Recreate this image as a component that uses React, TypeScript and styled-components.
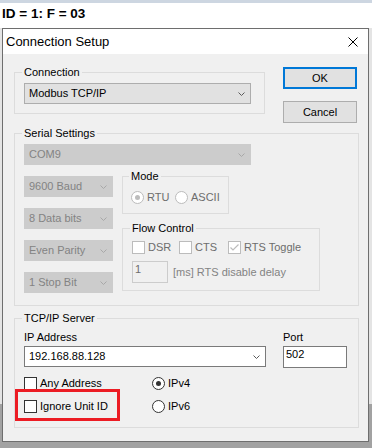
import React from 'react'
import styled, { createGlobalStyle, css } from 'styled-components'

const GlobalStyle = createGlobalStyle`
  html, body {
    margin: 0;
    padding: 0;
  }
  body {
    width: 372px;
    height: 448px;
    overflow: hidden;
    background: #ffffff;
    font-family: "Liberation Sans", Arial, sans-serif;
  }
`

const Page = styled.div`
  display: flex;
  flex-direction: column;
  width: 372px;
  height: 448px;
`

const TopStrip = styled.div`
  height: 3px;
  background: #cdd6e1;
`

const Header = styled.div`
  height: 25px;
  box-sizing: border-box;
  padding: 3px 0 0 2px;
  font-size: 13.5px;
  line-height: 16px;
  font-weight: bold;
  color: #000;
  background: #fff;
`

const Backdrop = styled.div`
  flex: 1;
  padding: 0 3px 6px 2px;
  background: linear-gradient(#e4e4e4 376px, #a2a2a2 376px);
`

const Dialog = styled.div`
  width: 367px;
  box-sizing: border-box;
  border: 1px solid #6e6e6e;
  background: #f0f0f0;
  display: flex;
  flex-direction: column;
`

const TitleBar = styled.div`
  height: 25px;
  display: flex;
  align-items: center;
  justify-content: space-between;
  padding: 0 10px 0 3px;
  background: #fff;
  font-size: 13px;
  line-height: 16px;
  color: #000;
`

const Body = styled.div`
  display: flex;
  flex-direction: column;
  padding: 12px 9px 13px 11px;
  font-size: 11px;
  line-height: 13px;
  color: #000;
`

const TopRow = styled.div`
  display: flex;
  align-items: flex-start;
`

const ButtonColumn = styled.div`
  display: flex;
  flex-direction: column;
  gap: 12px;
  margin: 1px 0 0 18px;
`

const Button = styled.button<{ $default?: boolean }>`
  width: 74px;
  height: 22px;
  box-sizing: border-box;
  padding: 0;
  background: #e1e1e1;
  border: ${p => (p.$default ? '2px solid #0078d7' : '1px solid #adadad')};
  font-family: "Liberation Sans", Arial, sans-serif;
  font-size: 11px;
  line-height: 13px;
  color: #000;
`

const Group = styled.fieldset<{ $w: number; $pad: string; $mt?: number }>`
  margin: ${p => p.$mt || 0}px 0 0 0;
  min-width: 0;
  box-sizing: border-box;
  width: ${p => p.$w}px;
  padding: ${p => p.$pad};
  border: 1px solid #dcdcdc;
`

const Legend = styled.legend`
  padding: 0 2px;
  margin-left: -2px;
  font-size: 11px;
  line-height: 13px;
  color: #000;
`

type ComboKind = 'normal' | 'disabled' | 'edit'

const comboKinds = {
  normal: css`
    background: #e1e1e1;
    border: 1px solid #adadad;
    color: #000;
  `,
  disabled: css`
    background: #cccccc;
    border: 1px solid #cccccc;
    color: #838383;
  `,
  edit: css`
    background: #fff;
    border: 1px solid #7a7a7a;
    color: #000;
  `,
}

const Combo = styled.div<{ $w: number; $kind: ComboKind }>`
  width: ${p => p.$w}px;
  height: 21px;
  box-sizing: border-box;
  display: flex;
  align-items: center;
  justify-content: space-between;
  padding: 0 5px 0 4px;
  white-space: nowrap;
  ${p => comboKinds[p.$kind]}
`

const TextBox = styled.div<{ $w: number; $disabled?: boolean }>`
  width: ${p => p.$w}px;
  height: 22px;
  box-sizing: border-box;
  padding: 1px 2px;
  border: 1px solid ${p => (p.$disabled ? '#cccccc' : '#7a7a7a')};
  background: ${p => (p.$disabled ? '#f0f0f0' : '#fff')};
  color: ${p => (p.$disabled ? '#6d6d6d' : '#000')};
`

const SerialGrid = styled.div`
  display: flex;
  gap: 9px;
  margin-top: 5px;
`

const ComboStack = styled.div`
  display: flex;
  flex-direction: column;
  gap: 11px;
  padding-top: 6px;
`

const SubStack = styled.div`
  display: flex;
  flex-direction: column;
  gap: 8px;
`

const OptionRow = styled.div`
  display: flex;
  align-items: center;
`

const Option = styled.label<{ $w?: number; $disabled?: boolean }>`
  display: flex;
  align-items: center;
  gap: 3px;
  width: ${p => (p.$w ? `${p.$w}px` : 'auto')};
  height: 13px;
  white-space: nowrap;
  color: ${p => (p.$disabled ? '#6d6d6d' : '#000')};
`

const Box = styled.span<{ $disabled?: boolean }>`
  flex: none;
  width: 13px;
  height: 13px;
  box-sizing: border-box;
  display: inline-flex;
  align-items: center;
  justify-content: center;
  border: 1px solid ${p => (p.$disabled ? '#bcbcbc' : '#333333')};
  background: #fff;
`

const Round = styled(Box)`
  border-radius: 50%;
`

const Dot = styled.span<{ $disabled?: boolean }>`
  width: 5px;
  height: 5px;
  border-radius: 50%;
  background: ${p => (p.$disabled ? '#bcbcbc' : '#333333')};
`

const DelayRow = styled.div`
  display: flex;
  align-items: center;
  gap: 5px;
  margin-top: 7px;
`

const Note = styled.span`
  color: #838383;
`

const IpRow = styled.div`
  display: flex;
  margin-top: 6px;
`

const Field = styled.div<{ $ml?: number }>`
  display: flex;
  flex-direction: column;
  gap: 2px;
  margin-left: ${p => p.$ml || 0}px;
`

const OptionGrid = styled.div`
  position: relative;
  display: grid;
  grid-template-columns: 128px 1fr;
  row-gap: 10px;
  margin-top: 9px;
`

const Highlight = styled.div`
  position: absolute;
  left: -9px;
  top: 12px;
  width: 105px;
  height: 32px;
  box-sizing: border-box;
  border: 3px solid #ec1c24;
  pointer-events: none;
`

const Chevron = ({ color }: { color: string }) => (
  <svg width="7" height="4" viewBox="0 0 7 4">
    <path d="M0.5 0.5 L3.5 3.5 L6.5 0.5" stroke={color} fill="none" strokeWidth="1" />
  </svg>
)

const CloseIcon = () => (
  <svg width="10" height="10" viewBox="0 0 10 10">
    <path d="M0.5 0.5 L9.5 9.5 M9.5 0.5 L0.5 9.5" stroke="#000" strokeWidth="1" fill="none" />
  </svg>
)

const Select = ({ w, kind, children }: { w: number; kind: ComboKind; children: React.ReactNode }) => (
  <Combo $w={w} $kind={kind}>
    <span>{children}</span>
    <Chevron color={kind === 'disabled' ? '#a8a8a8' : '#5a5a5a'} />
  </Combo>
)

const Check = ({ label, w, disabled, checked }: { label: string; w?: number; disabled?: boolean; checked?: boolean }) => (
  <Option $w={w} $disabled={disabled}>
    <Box $disabled={disabled}>
      {checked && (
        <svg width="11" height="11" viewBox="0 0 11 11">
          <path d="M1.5 5.5 L4 8 L9.5 2.5" stroke={disabled ? '#bcbcbc' : '#333'} strokeWidth="1.2" fill="none" />
        </svg>
      )}
    </Box>
    {label}
  </Option>
)

const RadioOpt = ({ label, w, disabled, checked }: { label: string; w?: number; disabled?: boolean; checked?: boolean }) => (
  <Option $w={w} $disabled={disabled}>
    <Round $disabled={disabled}>{checked && <Dot $disabled={disabled} />}</Round>
    {label}
  </Option>
)

export default function App() {
  return (
    <>
      <GlobalStyle />
      <Page>
        <TopStrip />
        <Header>ID = 1: F = 03</Header>
        <Backdrop>
          <Dialog>
            <TitleBar>
              <span>Connection Setup</span>
              <CloseIcon />
            </TitleBar>
            <Body>
              <TopRow>
                <Group $w={251} $pad="4px 9px 9px">
                  <Legend>Connection</Legend>
                  <Select w={227} kind="normal">Modbus TCP/IP</Select>
                </Group>
                <ButtonColumn>
                  <Button $default>OK</Button>
                  <Button>Cancel</Button>
                </ButtonColumn>
              </TopRow>

              <Group $w={345} $pad="4px 9px 12px" $mt={4}>
                <Legend>Serial Settings</Legend>
                <Select w={227} kind="disabled">COM9</Select>
                <SerialGrid>
                  <ComboStack>
                    <Select w={89} kind="disabled">9600 Baud</Select>
                    <Select w={89} kind="disabled">8 Data bits</Select>
                    <Select w={89} kind="disabled">Even Parity</Select>
                    <Select w={89} kind="disabled">1 Stop Bit</Select>
                  </ComboStack>
                  <SubStack>
                    <Group $w={107} $pad="8px 8px 9px">
                      <Legend>Mode</Legend>
                      <OptionRow>
                        <RadioOpt label="RTU" w={44} disabled checked />
                        <RadioOpt label="ASCII" disabled />
                      </OptionRow>
                    </Group>
                    <Group $w={198} $pad="6px 9px 7px">
                      <Legend>Flow Control</Legend>
                      <OptionRow>
                        <Check label="DSR" w={47} disabled />
                        <Check label="CTS" w={49} disabled />
                        <Check label="RTS Toggle" disabled checked />
                      </OptionRow>
                      <DelayRow>
                        <TextBox $w={36} $disabled>1</TextBox>
                        <Note>[ms] RTS disable delay</Note>
                      </DelayRow>
                    </Group>
                  </SubStack>
                </SerialGrid>
              </Group>

              <Group $w={345} $pad="0 9px 14px" $mt={6}>
                <Legend>TCP/IP Server</Legend>
                <IpRow>
                  <Field>
                    <span>IP Address</span>
                    <Select w={242} kind="edit">192.168.88.128</Select>
                  </Field>
                  <Field $ml={17}>
                    <span>Port</span>
                    <TextBox $w={64}>502</TextBox>
                  </Field>
                </IpRow>
                <OptionGrid>
                  <Check label="Any Address" />
                  <RadioOpt label="IPv4" checked />
                  <Check label="Ignore Unit ID" />
                  <RadioOpt label="IPv6" />
                  <Highlight />
                </OptionGrid>
              </Group>
            </Body>
          </Dialog>
        </Backdrop>
      </Page>
    </>
  )
}
